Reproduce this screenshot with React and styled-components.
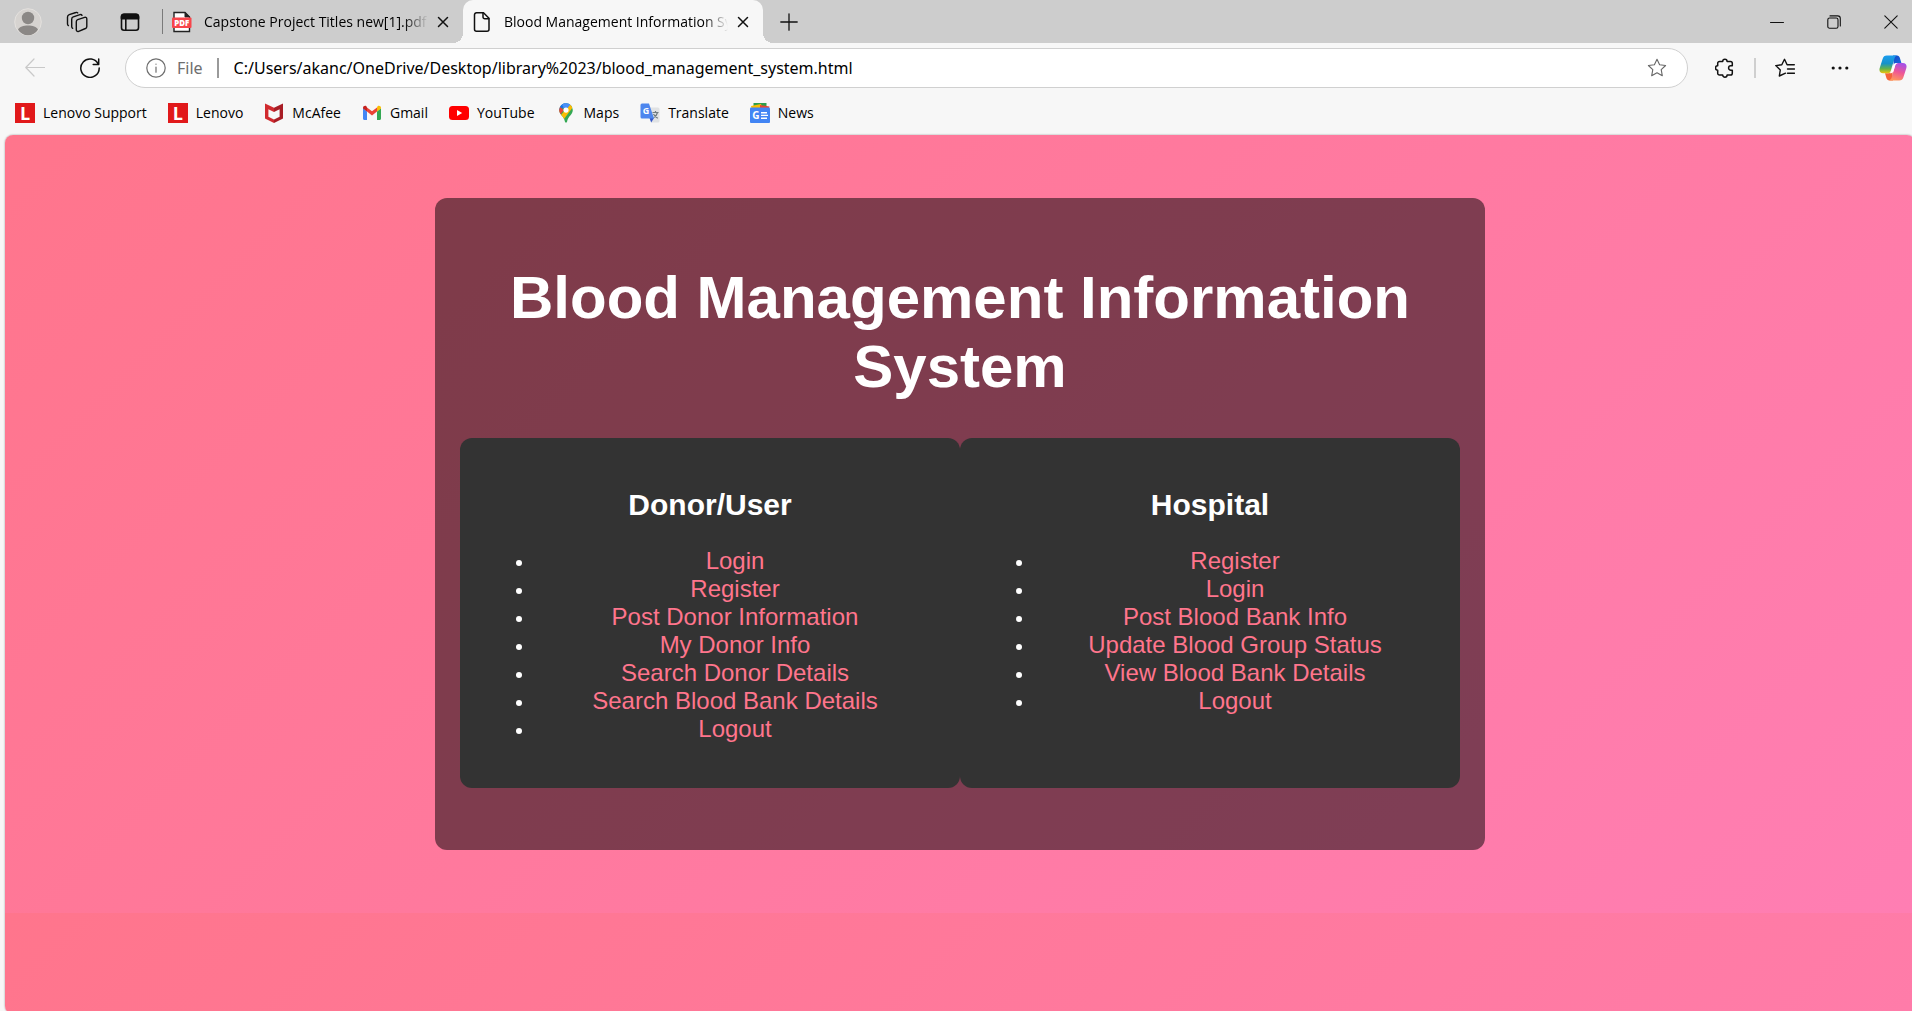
import React from "react";
import styled, { createGlobalStyle } from "styled-components";

const GlobalStyle = createGlobalStyle`
  *, *::before, *::after { box-sizing: border-box; }
  body { margin: 0; background: #f7f7f7; }
  button { border: 0; padding: 0; margin: 0; background: none; color: inherit; font: inherit; cursor: pointer; }
  svg { display: block; }
`;

const Shell = styled.div`
  display: flex;
  flex-direction: column;
  min-height: 100vh;
  overflow: hidden;
  background: #f7f7f7;
  color: #000;
  font-family: "Open Sans", "Noto Sans", sans-serif;
  font-size: 14px;
`;

const TabStrip = styled.header`
  display: flex;
  align-items: center;
  height: 43px;
  padding-left: 14px;
  background: #cdcdcd;
`;

const IconButton = styled.button`
  display: flex;
  flex: none;
  align-items: center;
  justify-content: center;
  width: ${(p) => p.$width || 20}px;
  height: 28px;
  margin-left: ${(p) => p.$before || 0}px;
`;

const Divider = styled.span`
  flex: none;
  width: ${(p) => p.$width || 2}px;
  height: ${(p) => p.$height || 20}px;
  margin-left: ${(p) => p.$before || 0}px;
  background: ${(p) => p.$color};
`;

const Tab = styled.div`
  position: relative;
  display: flex;
  align-items: center;
  flex: 0 1 300px;
  min-width: 120px;
  align-self: stretch;
  padding: 0 8px 0 9px;
  border-radius: 10px 10px 0 0;
  background: ${(p) => (p.$active ? "#f7f7f7" : "transparent")};

  &::before, &::after {
    content: "";
    display: ${(p) => (p.$active ? "block" : "none")};
    position: absolute;
    bottom: 0;
    width: 10px;
    height: 10px;
  }
  &::before {
    left: -10px;
    background: radial-gradient(circle at 0 0, transparent 10px, #f7f7f7 10px);
  }
  &::after {
    right: -10px;
    background: radial-gradient(circle at 100% 0, transparent 10px, #f7f7f7 10px);
  }
`;

const TabTitle = styled.span`
  flex: 1;
  min-width: 0;
  margin: 0 3px 0 12px;
  overflow: hidden;
  white-space: nowrap;
  line-height: 20px;
  mask-image: linear-gradient(90deg, #000 calc(100% - 24px), transparent);
`;

const WindowControls = styled.div`
  display: flex;
  gap: 15px;
  margin-left: auto;
`;

const Toolbar = styled.nav`
  display: flex;
  align-items: center;
  height: 50px;
  padding: 0 5px 0 25px;
`;

const AddressBar = styled.div`
  display: flex;
  flex: 1;
  align-items: center;
  min-width: 0;
  height: 40px;
  margin-left: 25px;
  padding: 0 20px;
  border: 1px solid #d0d0d0;
  border-radius: 20px;
  background: #fff;
`;

const Scheme = styled.label`
  margin: 0 14px 0 11px;
  color: #6e6e6e;
  font-family: "Noto Sans", "Open Sans", sans-serif;
  font-size: 16px;
`;

const AddressInput = styled.input`
  flex: 1;
  min-width: 0;
  height: 30px;
  padding: 0;
  margin-left: 15px;
  border: 0;
  outline: 0;
  background: transparent;
  color: #000;
  font: 16px "Noto Sans", "Open Sans", sans-serif;
`;

const Bookmarks = styled.nav`
  display: flex;
  align-items: center;
  gap: 21px;
  height: 42px;
  padding: 0 15px 2px;
`;

const Bookmark = styled.a`
  display: flex;
  align-items: center;
  gap: 8px;
  color: #000;
  line-height: 20px;
  text-decoration: none;
  white-space: nowrap;
`;

const LenovoMark = styled.span`
  display: flex;
  align-items: center;
  justify-content: center;
  width: 20px;
  height: 20px;
  background: #e1191b;
  color: #fff;
  font-weight: 700;
  font-size: 18px;
`;

const Site = styled.main`
  flex: 1;
  margin: 0 -3px -3px 5px;
  padding: 63px 20px;
  border-radius: 8px;
  background: linear-gradient(135deg, #ff758c, #ff7eb3) 0 0 / 100% 778px repeat-y;
  box-shadow: 0 0 2px rgba(0, 0, 0, 0.4);
  color: #fff;
  font-family: "Liberation Sans", Arial, sans-serif;
  text-align: center;
`;

const Card = styled.div`
  max-width: 1050px;
  margin: 0 auto;
  padding: 25px;
  border-radius: 12px;
  background: rgba(0, 0, 0, 0.5);
`;

const Title = styled.h1`
  margin: 40px 0 37px;
  font-size: 60px;
  line-height: 69px;
`;

const Panels = styled.div`
  display: flex;
  margin-bottom: 37px;
`;

const Panel = styled.section`
  flex: 1;
  padding: 25px;
  border-radius: 12px;
  background: #333;
`;

const PanelTitle = styled.h2`
  margin: 25px 0;
  font-size: 30px;
  line-height: 34px;
`;

const LinkList = styled.ul`
  margin: 0 0 20px;
  padding-left: 50px;
  font-size: 24px;
  line-height: 28px;

  li::marker { font-size: 20px; }
`;

const MenuLink = styled.a`
  color: #ff758c;
  text-decoration: none;
`;

const Stroke = ({ size = 20, box = 20, width = 1.4, color = "#111", children }) => (
  <svg width={size} height={size} viewBox={`0 0 ${box} ${box}`} fill="none" stroke={color}
    strokeWidth={width} strokeLinecap="round" strokeLinejoin="round" aria-hidden="true">
    {children}
  </svg>
);

const ProfileIcon = () => (
  <svg width="28" height="28" viewBox="0 0 28 28" aria-hidden="true">
    <circle cx="14" cy="14" r="13.3" fill="#d6d3d0" stroke="#e4e1de" strokeWidth="1" />
    <circle cx="14" cy="10" r="6.2" fill="#8b8886" />
    <path d="M4 21.500c1.500-2.600 5.300-4 10-4s8.500 1.400 10 4c-2.200 3.700-5.800 5.800-10 5.800s-7.800-2.100-10-5.800z" fill="#8b8886" />
  </svg>
);

const WorkspacesIcon = () => (
  <Stroke size={22} box={22} width={1.4}>
    <path d="M11.700 8.600l6.900-2.200c1.300-.4 2.200.3 2.200 1.600v7.400c0 1-.5 1.700-1.400 2.100l-6.700 2.800c-1.300.5-2.400-.1-2.400-1.500v-8c0-1.100.5-1.900 1.400-2.200z" />
    <path d="M16 4.300c-.4-.7-1.100-.9-2-.6L7.300 5.900C6.200 6.300 5.700 7 5.700 8.200v7.400c0 .8.300 1.400 1 1.700" />
    <path d="M11.700 1.900c-.4-.6-1-.7-1.800-.4L3.200 3.700C2.100 4.100 1.500 4.900 1.500 6v7.100c0 .7.300 1.200.9 1.500" />
  </Stroke>
);

const TabActionsIcon = () => (
  <Stroke size={20} width={1.6}>
    <rect x="1.500" y="2.200" width="17" height="16" rx="2.500" />
    <path d="M1.500 5a2.800 2.800 0 0 1 2.800-2.800h11.400A2.800 2.800 0 0 1 18.500 5v1.600h-17z" fill="#111" />
    <path d="M5.800 7v11" />
  </Stroke>
);

const PdfIcon = () => (
  <svg width="20" height="22" viewBox="0 0 20 22" aria-hidden="true">
    <path d="M2 1.500h11l4.500 4.500v14.500H2z" fill="#fff" stroke="#222" strokeWidth="1.400" />
    <path d="M13 1.500V6h4.500z" fill="#222" stroke="#222" strokeWidth="1" />
    <rect x="0" y="6.500" width="19.500" height="10.500" rx="1" fill="#f8454b" />
    <text x="9.800" y="14.700" fontSize="7.800" fontWeight="800" fill="#fff" textAnchor="middle" fontFamily="Open Sans, sans-serif">PDF</text>
  </svg>
);

const PageIcon = () => (
  <Stroke size={20} width={1.5}>
    <path d="M4.500 .8h7l5.500 5.500v10.900a2 2 0 0 1-2 2H4.500a2 2 0 0 1-2-2V2.800a2 2 0 0 1 2-2z" />
    <path d="M11 1v4a1.800 1.800 0 0 0 1.800 1.800h4" />
  </Stroke>
);

const CloseIcon = () => (
  <Stroke size={12} box={12} width={1.5}><path d="M1.500 1.500l9 9M10.500 1.500l-9 9" /></Stroke>
);

const StarPath = "M10 1.200l2.600 5.500 6 .8-4.400 4.200 1.100 6L10 14.800l-5.300 2.900 1.100-6L1.400 7.500l6-.8z";

const CopilotIcon = () => (
  <svg width="28" height="28" viewBox="0 0 28 28" aria-hidden="true">
    <defs>
      <linearGradient id="cpBlue" x1="0" y1="0" x2="0" y2="1">
        <stop offset="0" stopColor="#1b9df0" /><stop offset=".45" stopColor="#1692c8" />
        <stop offset=".75" stopColor="#65b347" /><stop offset="1" stopColor="#f1c40c" />
      </linearGradient>
      <linearGradient id="cpPink" x1=".6" y1="0" x2=".3" y2="1">
        <stop offset="0" stopColor="#a550e8" /><stop offset=".5" stopColor="#ef5795" />
        <stop offset="1" stopColor="#ff9a5a" />
      </linearGradient>
      <linearGradient id="cpNavy" x1="0" y1="0" x2="1" y2="1">
        <stop offset="0" stopColor="#1746c5" /><stop offset="1" stopColor="#1670e0" />
      </linearGradient>
    </defs>
    <path d="M14 1.500h4c1.600 0 2.400.9 2.900 2.500l1.500 4.900h-4c-2 0-3 .8-3.600 2.500z" fill="url(#cpNavy)" />
    <path d="M14 26.500h-3.600c-1.600 0-2.500-.9-3-2.500L6 19.200h3.800c2 0 3-.8 3.600-2.600z" fill="#f4633a" />
    <path d="M7.800 1.500h10.500c-1.600.3-2.400 1.500-2.900 3.200l-3.600 12c-.5 1.700-1.400 2.600-3.200 2.600H4.200C1 19.300-.1 17 .7 14L3.600 4.900C4.300 2.600 5.600 1.500 7.800 1.500z" fill="url(#cpBlue)" />
    <path d="M20.200 26.500H9.900c1.500-.4 2.300-1.500 2.800-3.200l3.500-11.800c.5-1.700 1.500-2.600 3.200-2.600h4.400c3.200 0 4.300 2.300 3.500 5.300l-2.900 9c-.7 2.200-2 3.300-4.200 3.300z" fill="url(#cpPink)" />
    <path d="M14.600 10.500c.7-1.200 1.900-1.600 3.800-1.600-1.400.4-1.900 1.200-2.300 2.600l-1.600 5.400c-.5 1.700-1.800 2.400-3.900 2.400 1.200-.5 1.600-1.400 2-2.600z" fill="#fff" />
  </svg>
);

const McAfeeIcon = () => (
  <svg width="20" height="20" viewBox="0 0 20 20" aria-hidden="true">
    <path d="M1 .5l9 4.300v4.200L4.400 6.300v7.500l5.600 2.700v3.400l-9-4.500z" fill="#d12a2f" />
    <path d="M19 .5l-9 4.300v4.200l5.600-2.700v7.500L10 16.500v3.400l9-4.500z" fill="#a81d25" />
  </svg>
);

const GmailIcon = () => (
  <svg width="20" height="20" viewBox="0 0 20 20" aria-hidden="true">
    <path d="M1 5v10.500C1 16.300 1.600 17 2.400 17H5V8.500z" fill="#4285f4" />
    <path d="M19 5v10.500c0 .8-.6 1.500-1.400 1.500H15V8.500z" fill="#34a853" />
    <path d="M15 4.500V8.600l4-3V5c0-1.900-2-2.900-3.400-1.800z" fill="#fbbc04" />
    <path d="M5 8.600V4.500l5 3.700 5-3.700v4.100l-5 3.800z" fill="#ea4335" />
    <path d="M1 5v.6l4 3V4.500l-.6-1.300C3 2.100 1 3.100 1 5z" fill="#c5221f" />
  </svg>
);

const YouTubeIcon = () => (
  <svg width="20" height="20" viewBox="0 0 20 20" aria-hidden="true">
    <rect x="0" y="3" width="20" height="14" rx="3.500" fill="#f00" />
    <path d="M8 7v6l5.200-3z" fill="#fff" />
  </svg>
);

const MapsIcon = () => (
  <svg width="20" height="20" viewBox="0 0 20 20" aria-hidden="true">
    <defs><clipPath id="pin"><path d="M10 .3a6.800 6.800 0 0 0-6.800 6.800c0 4.600 4.600 6 5.700 11.300.3 1.600 1.900 1.600 2.200 0 1.100-5.300 5.700-6.700 5.700-11.300A6.800 6.800 0 0 0 10 .3z" /></clipPath></defs>
    <g clipPath="url(#pin)">
      <rect width="20" height="20" fill="#34a853" />
      <path d="M0 0h20L10 7z" fill="#4285f4" />
      <path d="M9 0H0v4l5 4z" fill="#1a73e8" />
      <path d="M0 2.500l2 0L8 7l-5.500 7H0z" fill="#ea4335" />
      <path d="M4.500 12.500L14.500 1l5.500-1-12 16z" fill="#fbbc04" />
      <path d="M10 7l5-6.500-6-1.500-3 3z" fill="#4a90f8" />
    </g>
    <circle cx="10" cy="7.100" r="2.600" fill="#fff" />
  </svg>
);

const TranslateIcon = () => (
  <svg width="20" height="20" viewBox="0 0 20 20" aria-hidden="true">
    <path d="M7 4.500h11a1.500 1.500 0 0 1 1.500 1.500v12a1.500 1.500 0 0 1-1.500 1.500h-7z" fill="#e0e2e4" />
    <path d="M12.500 9.500h6M15.500 8v1.500M17.500 9.500c-.5 2.300-2 4-4 5.200M13.500 11c.8 1.700 2.300 3.300 4.300 4.300" fill="none" stroke="#6f7b80" strokeWidth="1.200" />
    <path d="M9.500 15h4.500l-2.800 4.500z" fill="#3457c8" />
    <path d="M2 .5h7l5 15H2A1.500 1.500 0 0 1 .5 14V2A1.500 1.500 0 0 1 2 .5z" fill="#4d86ee" />
    <text x="6" y="11" fontSize="9" fontWeight="700" fill="#fff" textAnchor="middle" fontFamily="Open Sans, sans-serif">G</text>
  </svg>
);

const NewsIcon = () => (
  <svg width="20" height="20" viewBox="0 0 20 20" aria-hidden="true">
    <path d="M3.500 0h13v6h-13z" fill="#2f9e4c" />
    <path d="M1 3l10-2 2 6H2z" fill="#fbbc04" />
    <path d="M10 2l9.500 1.500L18 8h-8z" fill="#ea4335" />
    <rect x="0" y="4.500" width="20" height="15.500" rx="1" fill="#4285f4" />
    <text x="5.800" y="16" fontSize="10" fontWeight="700" fill="#fff" textAnchor="middle" fontFamily="Open Sans, sans-serif">G</text>
    <path d="M11 9.700h6M11 12.400h7M11 15.200h6" stroke="#fff" strokeWidth="1.400" />
  </svg>
);

const Lenovo = () => <LenovoMark aria-hidden="true">L</LenovoMark>;

const bookmarks = [
  ["Lenovo Support", Lenovo],
  ["Lenovo", Lenovo],
  ["McAfee", McAfeeIcon],
  ["Gmail", GmailIcon],
  ["YouTube", YouTubeIcon],
  ["Maps", MapsIcon],
  ["Translate", TranslateIcon],
  ["News", NewsIcon],
];

const panels = [
  {
    title: "Donor/User",
    links: ["Login", "Register", "Post Donor Information", "My Donor Info", "Search Donor Details", "Search Blood Bank Details", "Logout"],
  },
  {
    title: "Hospital",
    links: ["Register", "Login", "Post Blood Bank Info", "Update Blood Group Status", "View Blood Bank Details", "Logout"],
  },
];

export default function App() {
  return (
    <Shell>
      <GlobalStyle />
      <TabStrip>
        <IconButton $width={28} aria-label="Profile"><ProfileIcon /></IconButton>
        <IconButton $width={40} $before={15} aria-label="Workspaces"><WorkspacesIcon /></IconButton>
        <IconButton $width={40} $before={13} aria-label="Tab actions"><TabActionsIcon /></IconButton>
        <Divider $before={12} $width={1} $height={25} $color="#7a7a7a" />
        <Tab>
          <PdfIcon />
          <TabTitle>Capstone Project Titles new[1].pdf</TabTitle>
          <IconButton $width={24} aria-label="Close tab"><CloseIcon /></IconButton>
        </Tab>
        <Tab $active>
          <PageIcon />
          <TabTitle>Blood Management Information System</TabTitle>
          <IconButton $width={24} aria-label="Close tab"><CloseIcon /></IconButton>
        </Tab>
        <IconButton $width={32} $before={10} aria-label="New tab">
          <Stroke size={18} box={18} width={1.3}><path d="M9 .8v16.400M.8 9h16.400" /></Stroke>
        </IconButton>
        <WindowControls>
          <IconButton $width={42} aria-label="Minimize">
            <Stroke size={14} box={14} width={1}><path d="M.5 7.500h13" /></Stroke>
          </IconButton>
          <IconButton $width={42} aria-label="Restore">
            <Stroke size={14} box={14} width={1.1}>
              <rect x=".8" y="3" width="10.200" height="10.200" rx="1.800" />
              <path d="M3 .9h7.600a2.700 2.700 0 0 1 2.700 2.700V11" />
            </Stroke>
          </IconButton>
          <IconButton $width={42} aria-label="Close window">
            <Stroke size={14} box={14} width={1.1}><path d="M.8 .8l12.400 12.400M13.200 .8L.8 13.200" /></Stroke>
          </IconButton>
        </WindowControls>
      </TabStrip>

      <Toolbar aria-label="Browser">
        <IconButton aria-label="Back">
          <Stroke width={1.2} color="#c9c9c9"><path d="M19.500 9.500H.8M9 1L.8 9.500 9 18" /></Stroke>
        </IconButton>
        <IconButton $before={35} aria-label="Refresh">
          <Stroke width={1.5}><path d="M18.300 6.200A9.200 9.200 0 1 0 19.200 10M18.700 1v5.500h-5.500" /></Stroke>
        </IconButton>
        <AddressBar>
          <Stroke width={1.2} color="#6e6e6e">
            <circle cx="10" cy="10" r="9.200" /><path d="M10 9v5.200M10 6v.2" />
          </Stroke>
          <Scheme htmlFor="address">File</Scheme>
          <Divider $width={2} $color="#9a9a9a" />
          <AddressInput id="address" type="text" readOnly
            value="C:/Users/akanc/OneDrive/Desktop/library%2023/blood_management_system.html" />
          <IconButton aria-label="Add to favorites">
            <Stroke width={1.1} color="#666"><path d={StarPath} /></Stroke>
          </IconButton>
        </AddressBar>
        <IconButton $before={27} aria-label="Extensions">
          <Stroke width={1.5}>
            <path d="M4.500 3.500h3.200a2.200 2.200 0 0 1 4.400 0h3.400a1.800 1.800 0 0 1 1.800 1.800v2.500h-1.500a2.200 2.200 0 0 0 0 4.400h1.500v3a1.800 1.800 0 0 1-1.800 1.800h-3.400a2.200 2.200 0 0 1-4.400 0H4.500a1.800 1.800 0 0 1-1.800-1.800v-3a2.200 2.200 0 0 1 0-4.400V5.300a1.800 1.800 0 0 1 1.800-1.800z" />
          </Stroke>
        </IconButton>
        <Divider $before={19} $color="#cfcfcf" />
        <IconButton $before={19} aria-label="Favorites">
          <Stroke width={1.4}>
            <path d="M10.500 15.200L4.300 18l1-6L.8 7.600l6-.8L9.500 1.300l2.600 5.500h7.200M12.500 11h7M12.500 15.200h7" />
          </Stroke>
        </IconButton>
        <IconButton $before={35} aria-label="Settings and more">
          <svg width="20" height="20" viewBox="0 0 20 20" fill="#111" aria-hidden="true">
            <circle cx="3.200" cy="10" r="1.600" /><circle cx="10" cy="10" r="1.600" /><circle cx="16.800" cy="10" r="1.600" />
          </svg>
        </IconButton>
        <IconButton $width={28} $before={29} aria-label="Copilot"><CopilotIcon /></IconButton>
      </Toolbar>

      <Bookmarks aria-label="Bookmarks">
        {bookmarks.map(([name, Icon]) => (
          <Bookmark key={name} href="#"><Icon />{name}</Bookmark>
        ))}
      </Bookmarks>

      <Site>
        <Card>
          <Title>Blood Management Information System</Title>
          <Panels>
            {panels.map((panel) => (
              <Panel key={panel.title}>
                <PanelTitle>{panel.title}</PanelTitle>
                <LinkList>
                  {panel.links.map((link) => (
                    <li key={link}><MenuLink href="#">{link}</MenuLink></li>
                  ))}
                </LinkList>
              </Panel>
            ))}
          </Panels>
        </Card>
      </Site>
    </Shell>
  );
}
